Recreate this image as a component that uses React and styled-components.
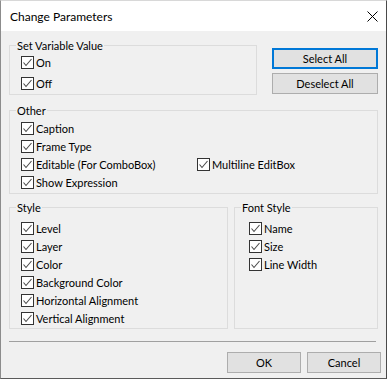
import styled, { createGlobalStyle } from "styled-components";

const GlobalStyle = createGlobalStyle`
  html, body {
    margin: 0;
    background: #ffffff;
  }
  body {
    font-family: Lato, "Liberation Sans", sans-serif;
    font-size: 11px;
    color: #000000;
  }
`

const otherItems = ["Caption", "Frame Type", "Editable (For ComboBox)", "Show Expression"]
const styleItems = ["Level", "Layer", "Color", "Background Color", "Horizontal Alignment", "Vertical Alignment"]
const fontItems = ["Name", "Size", "Line Width"]

function Check({ label }) {
  return (
    <CheckRow>
      <Box>
        <svg width="11" height="11" viewBox="0 0 11 11">
          <path d="M1.5 5.5 L4 8.5 L9.5 2" fill="none" stroke="#4a4a4a" strokeWidth="1.1" />
        </svg>
      </Box>
      <span>{label}</span>
    </CheckRow>
  )
}

export default function App() {
  return (
    <>
      <GlobalStyle />
      <Window>
        <TitleBar>
          <Title>Change Parameters</Title>
          <svg width="11" height="11" viewBox="0 0 11 11">
            <path d="M0.5 0.5 L10.5 10.5 M10.5 0.5 L0.5 10.5" stroke="#000" strokeWidth="1" />
          </svg>
        </TitleBar>
        <Body>
          <TopRow>
            <Group $width="248px" $pt="8px" $pb="2px" $pl="11px">
              <Legend>Set Variable Value</Legend>
              <Stack $gap="4px">
                <Check label="On" />
                <Check label="Off" />
              </Stack>
            </Group>
            <ButtonCol>
              <Button $focused>Select All</Button>
              <Button>Deselect All</Button>
            </ButtonCol>
          </TopRow>

          <Group $pt="9px" $pb="2px" $pl="11px" style={{ marginTop: 15 }}>
            <Legend>Other</Legend>
            <OtherGrid>
              <Check label={otherItems[0]} />
              <span />
              <Check label={otherItems[1]} />
              <span />
              <Check label={otherItems[2]} />
              <Check label="Multiline EditBox" />
              <Check label={otherItems[3]} />
            </OtherGrid>
          </Group>

          <BottomRow>
            <Group $width="219px" $pt="12px" $pb="1px" $pl="11px">
              <Legend>Style</Legend>
              <Stack $gap="1px">
                {styleItems.map((s) => (
                  <Check key={s} label={s} />
                ))}
              </Stack>
            </Group>
            <Group $pt="12px" $pb="1px" $pl="14px" style={{ flex: 1 }}>
              <Legend>Font Style</Legend>
              <Stack $gap="1px">
                {fontItems.map((s) => (
                  <Check key={s} label={s} />
                ))}
              </Stack>
            </Group>
          </BottomRow>

          <Separator />

          <Footer>
            <Button $w="74px">OK</Button>
            <Button $w="74px">Cancel</Button>
          </Footer>
        </Body>
      </Window>
    </>
  )
}

const Window = styled.div`
  width: 387px;
  height: 379px;
  box-sizing: border-box;
  border: 1px solid #8c8c8c;
  border-top-color: #d8d8d8;
  border-right-color: #4a4a4a;
  border-bottom-color: #5a5a5a;
  background: #f0f0f0;
  display: flex;
  flex-direction: column;
`
const TitleBar = styled.div`
  height: 30px;
  background: #ffffff;
  display: flex;
  align-items: center;
  justify-content: space-between;
  padding: 0 8px 0 9px;
  & svg {
    margin-top: 1px;
  }
`
const Title = styled.span`
  font-size: 12px;
  margin-top: 1px;
`
const Body = styled.div`
  flex: 1;
  padding: 14px 8px 0 8px;
  display: flex;
  flex-direction: column;
`
const TopRow = styled.div`
  display: flex;
  justify-content: space-between;
  align-items: flex-start;
`
const Group = styled.div`
  position: relative;
  box-sizing: border-box;
  width: ${(p) => p.$width || "auto"};
  border: 1px solid #dcdcdc;
  padding: ${(p) => p.$pt} 4px ${(p) => p.$pb} ${(p) => p.$pl};
`
const Legend = styled.span`
  position: absolute;
  top: -8px;
  left: 6px;
  padding: 0 1px;
  line-height: 15px;
  background: #f0f0f0;
`
const Stack = styled.div`
  display: flex;
  flex-direction: column;
  gap: ${(p) => p.$gap};
`
const OtherGrid = styled.div`
  display: grid;
  grid-template-columns: 176px auto;
  row-gap: 1px;
`
const CheckRow = styled.div`
  display: flex;
  align-items: center;
  height: 17px;
  gap: 2px;
  white-space: nowrap;
`
const Box = styled.span`
  width: 13px;
  height: 13px;
  box-sizing: border-box;
  border: 1px solid #333333;
  background: #ffffff;
  display: flex;
  align-items: center;
  justify-content: center;
  flex: none;
`
const ButtonCol = styled.div`
  width: 106px;
  margin-top: 3px;
  display: flex;
  flex-direction: column;
  gap: 4px;
`
const Button = styled.button`
  width: ${(p) => p.$w || "100%"};
  height: 21px;
  box-sizing: border-box;
  padding: 0;
  font-family: inherit;
  font-size: 11px;
  color: #000;
  background: #e1e1e1;
  border: ${(p) => (p.$focused ? "2px solid #0078d7" : "1px solid #adadad")};
`
const BottomRow = styled.div`
  display: flex;
  gap: 6px;
  margin-top: 13px;
`
const Separator = styled.div`
  height: 1px;
  background: #a0a0a0;
  margin: 12px 2px 0 0;
`
const Footer = styled.div`
  display: flex;
  justify-content: flex-end;
  gap: 6px;
  margin: 10px -3px 0 0;
`
